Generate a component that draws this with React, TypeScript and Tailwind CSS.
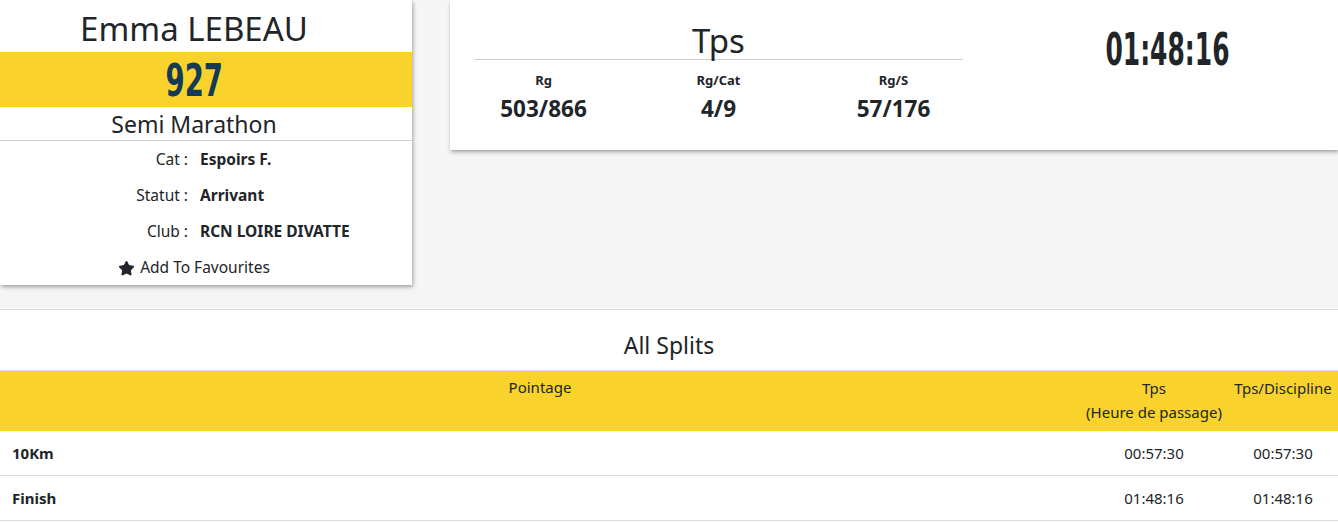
import React from 'react';
import { Star } from 'lucide-react';

const font = { fontFamily: '"Noto Sans", "Open Sans", sans-serif' };
const narrow = { fontFamily: '"Liberation Sans Narrow", "DejaVu Sans Condensed", sans-serif' };

const ranks = [
  { label: 'Rg', value: '503/866' },
  { label: 'Rg/Cat', value: '4/9' },
  { label: 'Rg/S', value: '57/176' },
];

const infos = [
  { label: 'Cat :', value: 'Espoirs F.' },
  { label: 'Statut :', value: 'Arrivant' },
  { label: 'Club :', value: 'RCN LOIRE DIVATTE' },
];

const splits = [
  { name: '10Km', tps: '00:57:30', disc: '00:57:30' },
  { name: 'Finish', tps: '01:48:16', disc: '01:48:16' },
];

export default function App() {
  return (
    <div className="w-[1338px] h-[522px] bg-[#f5f5f5] text-[#212529] overflow-hidden" style={font}>
      <div className="flex items-start h-[309px]">
        {/* runner card */}
        <div className="w-[412px] h-[285px] shrink-0 bg-white shadow-[1px_2px_4px_rgba(0,0,0,0.35)] flex flex-col">
          <div className="h-[52px] shrink-0 flex items-center justify-center pr-[24px] text-[33px] leading-none pt-[4px]">Emma LEBEAU</div>
          <div className="h-[55px] shrink-0 bg-[#f9d32b] flex items-center justify-center pr-[24px]">
            <span className="text-[45px] font-bold text-[#143a55] scale-x-[0.68] inline-block leading-none pt-[2px]" style={narrow}>927</span>
          </div>
          <div className="h-[34px] shrink-0 flex items-center justify-center pr-[24px] text-[23px] border-b border-[#cfcfcf] pt-[2px]">Semi Marathon</div>
          <div className="flex flex-col pt-[1px]">
            {infos.map((r) => (
              <div key={r.label} className="h-[36px] shrink-0 flex items-center text-[15.5px]">
                <span className="w-[188px] text-right">{r.label}</span>
                <span className="pl-[12px] font-bold">{r.value}</span>
              </div>
            ))}
            <div className="h-[36px] shrink-0 flex items-center justify-center gap-[5px] text-[15.5px] pr-[24px]">
              <Star size={17} fill="#212529" strokeWidth={1.5} />
              <span>Add To Favourites</span>
            </div>
          </div>
        </div>

        {/* time card */}
        <div className="ml-[38px] flex-1 h-[150px] bg-white shadow-[1px_2px_4px_rgba(0,0,0,0.35)] flex">
          <div className="ml-[24px] w-[489px] flex flex-col">
            <div className="h-[60px] flex items-end justify-center border-b border-[#cfcfcf] text-[33px] leading-none pb-[2px]">Tps</div>
            <div className="grid grid-cols-3 pt-[12px] -mx-[18px]">
              {ranks.map((r) => (
                <div key={r.label} className="flex flex-col items-center">
                  <span className="text-[13px] font-bold leading-[16px]">{r.label}</span>
                  <span className="text-[22.5px] font-bold leading-[30px] mt-[6px]">{r.value}</span>
                </div>
              ))}
            </div>
          </div>
          <div className="flex-1 flex justify-center pl-[34px] pt-[24px]">
            <span className="text-[44px] font-bold leading-[52px] inline-block scale-x-[0.63]" style={narrow}>01:48:16</span>
          </div>
        </div>
      </div>

      {/* splits */}
      <div className="bg-white border-t border-[#dcdcdc] h-[213px]">
        <div className="h-[60px] flex items-end justify-center text-[23px] pb-[8px]">All Splits</div>
        <table className="w-full border-collapse text-[15px]">
          <thead>
            <tr className="bg-[#f9d32b] h-[60px] align-top border-t border-[#dcdcdc]">
              <th className="font-normal pt-[5px] text-center">Pointage</th>
              <th className="font-normal pt-[5px] w-[148px] text-center leading-[24px]">Tps<br />(Heure de passage)</th>
              <th className="font-normal pt-[5px] w-[110px] text-center leading-[24px]">Tps/Discipline</th>
            </tr>
          </thead>
          <tbody>
            {splits.map((s) => (
              <tr key={s.name} className="h-[45px] border-b border-[#dcdcdc]">
                <td className="pl-[12px] font-bold">{s.name}</td>
                <td className="text-center">{s.tps}</td>
                <td className="text-center">{s.disc}</td>
              </tr>
            ))}
          </tbody>
        </table>
      </div>
    </div>
  );
}
